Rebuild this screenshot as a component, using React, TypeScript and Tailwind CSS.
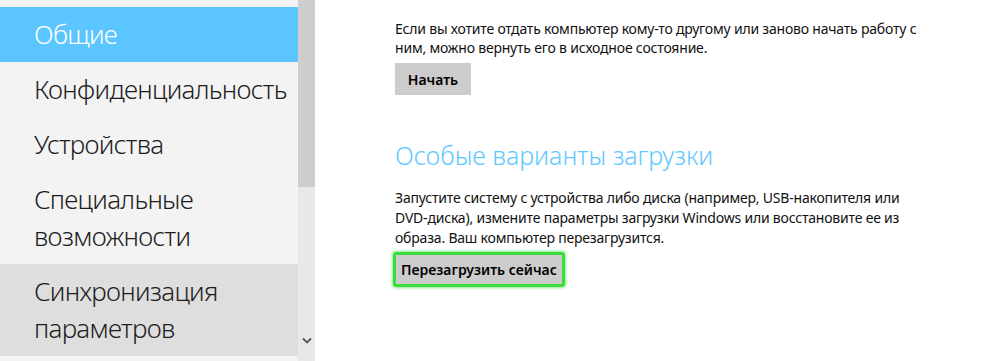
import React from "react";

const font = { fontFamily: '"Noto Sans", "Open Sans", Arial, sans-serif' };

function MenuItem({ lines, variant }: { lines: string[]; variant: "active" | "normal" | "hover" }) {
  const bg =
    variant === "active" ? "bg-[#5bc5ff] text-white" : variant === "hover" ? "bg-[#dedede] text-[#1e1e1e]" : "text-[#1e1e1e]";
  return (
    <div className={`${bg} pl-[34px] py-[9px]`}>
      {lines.map((l) => (
        <div key={l} className="text-[26px] leading-[37px] font-light tracking-[-0.7px] whitespace-nowrap">
          {l}
        </div>
      ))}
    </div>
  );
}

export default function App() {
  return (
    <div className="flex w-[996px] h-[361px] bg-white overflow-hidden" style={font}>
      <aside className="w-[298px] bg-[#f3f3f3] pt-[7px] flex flex-col">
        <MenuItem lines={["Общие"]} variant="active" />
        <MenuItem lines={["Конфиденциальность"]} variant="normal" />
        <MenuItem lines={["Устройства"]} variant="normal" />
        <MenuItem lines={["Специальные", "возможности"]} variant="normal" />
        <MenuItem lines={["Синхронизация", "параметров"]} variant="hover" />
      </aside>
      <div className="w-[17px] bg-[#e8e8e8] flex flex-col">
        <div className="h-[187px] bg-[#cdcdcd]" />
        <div className="flex-1" />
        <div className="h-[30px] flex items-start justify-center pt-[6px]">
          <svg width="10" height="7" viewBox="0 0 10 7">
            <path d="M1 1.5 L5 5.5 L9 1.5" stroke="#555" strokeWidth="1.8" fill="none" />
          </svg>
        </div>
      </div>
      <main className="flex-1 pl-[80px] pt-[19px] text-[#111]">
        <div className="text-[14px] leading-[19px] tracking-[-0.2px] whitespace-nowrap">
          <div>Если вы хотите отдать компьютер кому-то другому или заново начать работу с</div>
          <div>ним, можно вернуть его в исходное состояние.</div>
        </div>
        <button className="mt-[6px] h-[32px] w-[76px] bg-[#cccccc] text-[14px] font-semibold text-black">
          Начать
        </button>
        <h2 className="mt-[42px] text-[25px] leading-[36px] font-light text-[#5ec8ff] whitespace-nowrap">
          Особые варианты загрузки
        </h2>
        <div className="mt-[15px] text-[14px] leading-[20px] tracking-[-0.2px] whitespace-nowrap">
          <div>Запустите систему с устройства либо диска (например, USB-накопителя или</div>
          <div>DVD-диска), измените параметры загрузки Windows или восстановите ее из</div>
          <div>образа. Ваш компьютер перезагрузится.</div>
        </div>
        <div className="mt-[4px] -ml-[2px] inline-block rounded-[3px] border-[3px] border-[#3ddc3d] shadow-[0_0_3px_1px_rgba(60,220,60,0.6)]">
          <button className="block h-[29px] px-[5px] bg-[#cccccc] text-[14px] font-semibold text-black whitespace-nowrap">
            Перезагрузить сейчас
          </button>
        </div>
      </main>
    </div>
  );
}
